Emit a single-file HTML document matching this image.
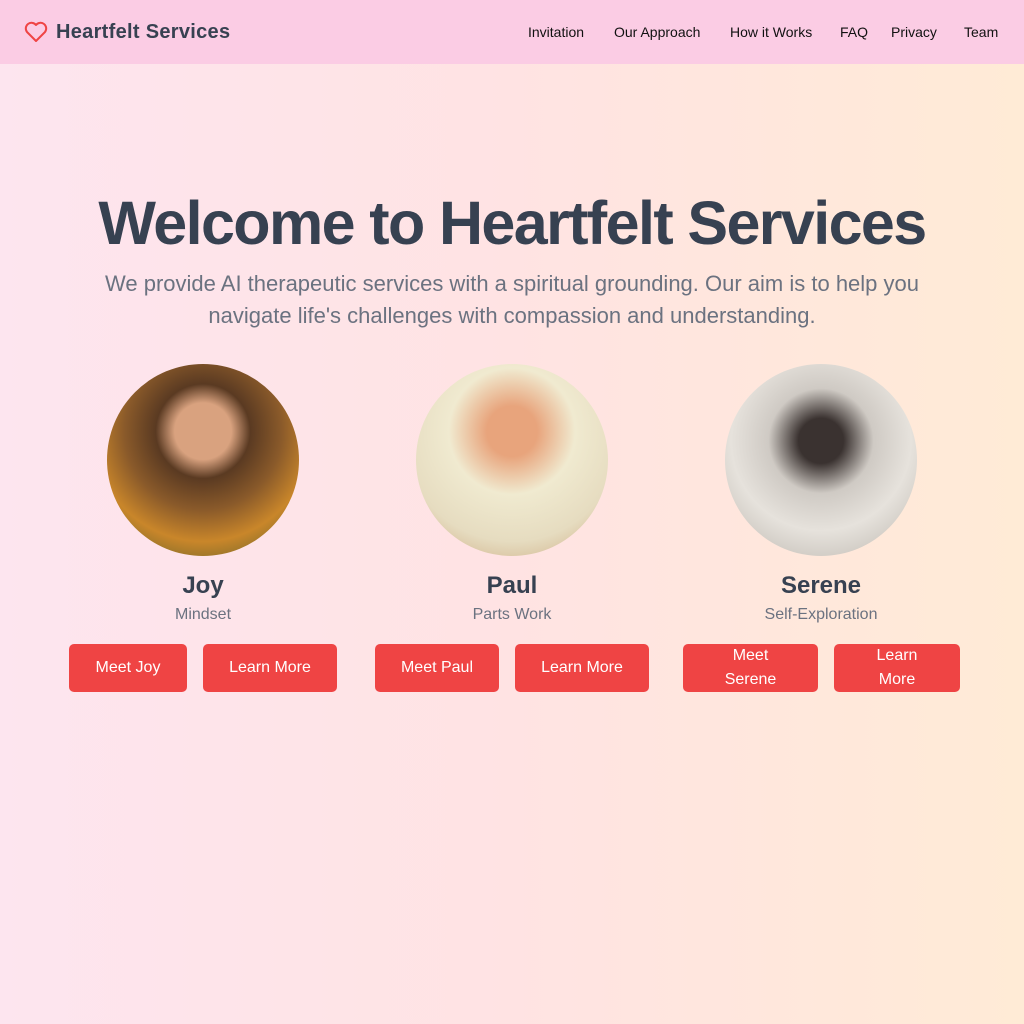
<!DOCTYPE html>
<html><head><meta charset="utf-8"><style>
*{margin:0;padding:0;box-sizing:border-box}
body{width:1024px;height:1024px;overflow:hidden;font-family:"Liberation Sans",sans-serif;background:linear-gradient(90deg,#fde5ef 0%,#ffe3e3 50%,#ffebd6 100%);position:relative}
.nav{position:absolute;left:0;top:0;width:1024px;height:64px;background:#fbcce4}
.logo{position:absolute;left:56px;top:21px;font-size:20px;font-weight:bold;color:#374151;letter-spacing:0.3px}
.links a{position:absolute;top:24px;font-size:14px;color:#111;text-decoration:none}
h1{position:absolute;left:0;width:1024px;top:188px;text-align:center;font-size:61px;letter-spacing:-1.6px;color:#374151;font-weight:bold}
.sub{position:absolute;left:70px;width:884px;top:268px;text-align:center;font-size:22px;line-height:32px;color:#6b7280}
.c{position:absolute;top:364px;width:192px;height:192px;border-radius:50%}
.n{position:absolute;top:572px;width:300px;text-align:center;font-size:24px;font-weight:bold;color:#374151}
.r{position:absolute;top:606px;width:300px;text-align:center;font-size:16px;color:#6b7280}
.b{position:absolute;top:644px;height:48px;background:#ef4444;color:#fff;border-radius:5px;font-size:16px;display:flex;align-items:center;justify-content:center;text-align:center;line-height:24px}
</style></head><body>
<div class="nav">
<svg style="position:absolute;left:24px;top:21px" width="24" height="22" viewBox="0 0 24 22"><path d="M12 20 L3 11 A5 5 0 0 1 12 4 A5 5 0 0 1 21 11 Z" fill="none" stroke="#ef4444" stroke-width="2" stroke-linejoin="round"/></svg>
<div class="logo">Heartfelt Services</div>
<div class="links"><a style="left:528px">Invitation</a><a style="left:614px">Our Approach</a><a style="left:730px">How it Works</a><a style="left:840px">FAQ</a><a style="left:891px">Privacy</a><a style="left:964px">Team</a></div>
</div>
<h1>Welcome to Heartfelt Services</h1>
<div class="sub">We provide AI therapeutic services with a spiritual grounding. Our aim is to help you navigate life's challenges with compassion and understanding.</div>
<div class="c" style="left:107px;background:radial-gradient(circle at 50% 35%,#d9a27f 0 18%,#5a3a22 30%,#8a5a2a 50%,#c9862a 70%,#4a5a2a 100%)"></div>
<div class="c" style="left:416px;background:radial-gradient(circle at 50% 35%,#e8a47c 0 16%,#f0ead0 40%,#e6dcc0 70%,#c9a57a 100%)"></div>
<div class="c" style="left:725px;background:radial-gradient(circle at 50% 40%,#3a3230 0 15%,#cfcac4 35%,#e6e2dc 60%,#b8b2aa 100%)"></div>
<div class="n" style="left:53px">Joy</div><div class="r" style="left:53px">Mindset</div>
<div class="n" style="left:362px">Paul</div><div class="r" style="left:362px">Parts Work</div>
<div class="n" style="left:671px">Serene</div><div class="r" style="left:671px">Self-Exploration</div>
<div class="b" style="left:69px;width:118px">Meet Joy</div><div class="b" style="left:203px;width:134px">Learn More</div>
<div class="b" style="left:375px;width:124px">Meet Paul</div><div class="b" style="left:515px;width:134px">Learn More</div>
<div class="b" style="left:683px;width:135px">Meet<br>Serene</div><div class="b" style="left:834px;width:126px">Learn<br>More</div>
</body></html>
